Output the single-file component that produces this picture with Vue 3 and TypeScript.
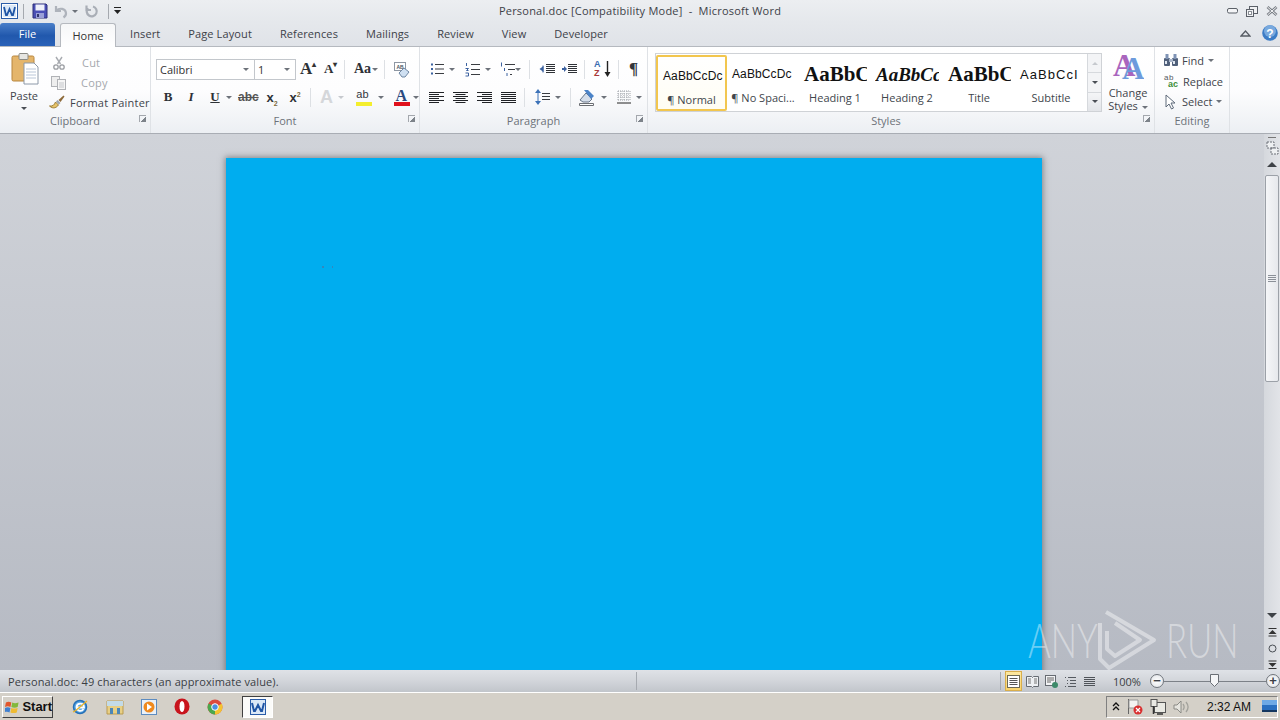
<script setup lang="ts">
const tabs = ['Insert', 'Page Layout', 'References', 'Mailings', 'Review', 'View', 'Developer']
const styles = [
  { sample: 'AaBbCcDc', label: '¶ Normal', cls: 's-body', on: true },
  { sample: 'AaBbCcDc', label: '¶ No Spaci...', cls: 's-body', on: false },
  { sample: 'AaBbC', label: 'Heading 1', cls: 's-h1', on: false },
  { sample: 'AaBbCc', label: 'Heading 2', cls: 's-h2', on: false },
  { sample: 'AaBbC', label: 'Title', cls: 's-h1', on: false },
  { sample: 'AaBbCcI', label: 'Subtitle', cls: 's-sub', on: false },
]
</script>

<template>
  <div class="app">
    <header class="titlebar">
      <div class="qat">
        <svg class="ic" width="18" height="18" viewBox="0 0 18 18"><rect x="0.5" y="1.5" width="16" height="15" fill="#fff" stroke="#2a5ca8"/><rect x="2" y="3" width="13" height="12" fill="#dbe8f7"/><path d="M3 5l2 8 1 0 2.500-6 2.500 6 1 0 2-8" fill="none" stroke="#1f55a5" stroke-width="1.800"/></svg>
        <i class="qsep"></i>
        <svg class="ic save" width="16" height="16" viewBox="0 0 16 16"><path d="M1 1h13l1 1v13H1z" fill="#4a4fb5" stroke="#2c2f78"/><rect x="3.500" y="1.500" width="9" height="6" fill="#eef0fa"/><rect x="4" y="10" width="8" height="5" fill="#9aa0d8"/><rect x="5" y="11" width="2" height="3" fill="#33366f"/></svg>
        <svg class="ic undo" width="15" height="15" viewBox="0 0 15 15"><path d="M2 2v5h5M2.500 6.500c3-3 9-2 9.500 2.500.2 2-1 3.500-2.500 4.500" fill="none" stroke="#aeb3bb" stroke-width="2.200"/></svg>
        <i class="arrow grey"></i>
        <svg class="ic redo" width="14" height="15" viewBox="0 0 14 15"><path d="M8 2.500a5 5 0 1 1-5 1.500M1.500 1.500v4.500h4.500" fill="none" stroke="#a9aeb6" stroke-width="2.200"/></svg>
        <i class="qsep"></i>
        <svg class="ic" width="7" height="8" viewBox="0 0 7 8"><path d="M0 0.500h7" stroke="#222"/><path d="M0 3h7L3.500 7z" fill="#222"/></svg>
      </div>
      <div class="caption">Personal.doc [Compatibility Mode]&nbsp; -&nbsp; Microsoft Word</div>
      <div class="winbtns">
        <svg width="11" height="6" viewBox="0 0 11 6"><rect x="0.500" y="0.500" width="10" height="4.500" rx="1.500" fill="#f4f5f7" stroke="#5b6068"/></svg>
        <svg width="12" height="11" viewBox="0 0 12 11"><rect x="3.500" y="0.500" width="8" height="7" fill="#f0f1f3" stroke="#5b6068"/><rect x="0.500" y="3.500" width="7" height="7" fill="#f0f1f3" stroke="#5b6068"/><rect x="2.500" y="5.500" width="3" height="3" fill="#fff" stroke="#8a8f96"/></svg>
        <svg width="12" height="10" viewBox="0 0 12 10"><path d="M1.500 1L10.500 9M10.500 1L1.500 9" stroke="#7a7f86" stroke-width="2.800"/><path d="M1.500 1L10.500 9M10.500 1L1.500 9" stroke="#f2f3f5" stroke-width="1"/></svg>
      </div>
    </header>

    <nav class="tabs">
      <div class="tab-file">File</div>
      <div class="tab-home">Home</div>
      <div v-for="t in tabs" :key="t" class="tab">{{ t }}</div>
      <div class="tab-right">
        <svg width="11" height="8" viewBox="0 0 11 8"><path d="M1 7l4.500-5L10 7z" fill="none" stroke="#555b63" stroke-width="1.300"/></svg>
        <svg width="16" height="16" viewBox="0 0 16 16"><circle cx="8" cy="8" r="7.800" fill="#3c7cc6"/><circle cx="8" cy="6" r="6" fill="#78a9de"/><text x="8" y="12.500" text-anchor="middle" class="helpq">?</text></svg>
      </div>
    </nav>

    <section class="ribbon">
      <!-- Clipboard -->
      <div class="group g-clip">
        <div class="gbody clip-body">
          <div class="paste">
            <svg width="28" height="32" viewBox="0 0 28 32"><rect x="1" y="3" width="22" height="25" rx="1.500" fill="#e4b56b" stroke="#b8863e"/><rect x="8" y="0.500" width="9" height="6" rx="1" fill="#e6e6e2" stroke="#8b8b85"/><path d="M13 10h10l4 4v17H13z" fill="#fff" stroke="#8c98a8"/><path d="M15 16h10M15 19h10M15 22h10M15 25h10" stroke="#b9c6d8"/></svg>
            <span class="lbl">Paste</span>
            <i class="arrow"></i>
          </div>
          <div class="clip-list">
            <div class="row-item dim">
              <svg width="14" height="14" viewBox="0 0 14 14"><path d="M4 1l4.500 7M10 1L5.500 8" stroke="#a8abb0" stroke-width="1.400"/><circle cx="4" cy="11" r="2.200" fill="none" stroke="#9a9da2" stroke-width="1.300"/><circle cx="10" cy="11" r="2.200" fill="none" stroke="#9a9da2" stroke-width="1.300"/></svg>
              <span>Cut</span>
            </div>
            <div class="row-item dim">
              <svg width="15" height="14" viewBox="0 0 15 14"><rect x="0.500" y="0.500" width="8" height="10" fill="#eee" stroke="#b0b2b6"/><rect x="6.500" y="3.500" width="8" height="10" fill="#f6f6f6" stroke="#b0b2b6"/><path d="M8 7h5M8 9h5M8 11h5" stroke="#c4c6ca"/></svg>
              <span>Copy</span>
            </div>
            <div class="row-item">
              <svg width="16" height="15" viewBox="0 0 16 15"><path d="M0.500 11c3 .5 5-1 6-4l3 3c-2 2.500-5 4.500-9 1z" fill="#e7c46a" stroke="#9a7c36"/><path d="M7 6.500l3 3 1.500-1.500-3-3z" fill="#9aa3ae"/><path d="M9.500 5l2 2L15.500 1.500 14.500.5z" fill="#8d6a3a"/></svg>
              <span>Format Painter</span>
            </div>
          </div>
        </div>
        <footer class="gfoot">Clipboard<i class="launch"></i></footer>
      </div>

      <!-- Font -->
      <div class="group g-font">
        <div class="gbody col">
          <div class="line l1">
            <div class="combo c-name"><span>Calibri</span><i class="arrow grey"></i></div>
            <div class="combo c-size"><span>1</span><i class="arrow grey"></i></div>
            <span class="gly grow">A<sup>▴</sup></span>
            <span class="gly shrink">A<sup>▾</sup></span>
            <i class="vsep s1"></i>
            <span class="gly case">Aa<i class="arrow grey"></i></span>
            <i class="vsep s2"></i>
            <svg class="clear" width="17" height="17" viewBox="0 0 17 17"><rect x="1.500" y="1.500" width="11" height="8" fill="#fff" stroke="#8e97a3"/><text x="7" y="8" text-anchor="middle" class="tiny">AB</text><path d="M6 12l5-5 5 4-4 5H9z" fill="#cfe0f2" stroke="#6f87a3"/></svg>
          </div>
          <div class="line l2">
            <span class="fmt b">B</span>
            <span class="fmt i">I</span>
            <span class="fmt u">U</span>
            <i class="arrow grey a-u"></i>
            <span class="fmt st">abc</span>
            <span class="fmt sc">x<sub>2</sub></span>
            <span class="fmt sp">x<sup>2</sup></span>
            <i class="vsep s3"></i>
            <span class="fx">A</span><i class="arrow pale"></i>
            <span class="hl">ab<em></em></span><i class="arrow grey"></i>
            <span class="fc">A<em></em></span><i class="arrow grey"></i>
          </div>
        </div>
        <footer class="gfoot">Font<i class="launch"></i></footer>
      </div>

      <!-- Paragraph -->
      <div class="group g-para">
        <div class="gbody col">
          <div class="line p1">
            <svg class="lst" width="14" height="14" viewBox="0 0 14 14"><path d="M5 2.500h9M5 7h9M5 11.500h9" stroke="#3a3d42"/><path d="M1 1.500h2v2H1zM1 6h2v2H1zM1 10.500h2v2H1z" fill="#3c62a0"/></svg><i class="arrow grey"></i>
            <svg class="num" width="15" height="15" viewBox="0 0 15 15"><path d="M6 2.500h9M6 7.500h9M6 12.500h9" stroke="#3a3d42"/><path d="M1.500 1v3M.5 6.500h3l-2 2h2M.5 11h3v3h-3" fill="none" stroke="#3c62a0"/></svg><i class="arrow grey"></i>
            <svg class="ml" width="15" height="15" viewBox="0 0 15 15"><path d="M5 2.500h10M8 7.500h7M10 12.500h2" stroke="#3a3d42"/><path d="M1.500 0.500v4M4.500 6v3M7 11v3" fill="none" stroke="#3c62a0"/></svg><i class="arrow grey"></i>
            <i class="vsep sp1"></i>
            <svg class="out" width="16" height="15" viewBox="0 0 16 15"><path d="M7 2.500h9M7 4.500h9M7 6.500h9M7 8.500h9M7 10.500h9" stroke="#2f3237"/><path d="M4 3.500v7" stroke="#3c62a0"/><path d="M0.500 7l4-3v6z" fill="#3c62a0"/></svg>
            <svg class="ind" width="16" height="15" viewBox="0 0 16 15"><path d="M7 2.500h9M7 4.500h9M7 6.500h9M7 8.500h9M7 10.500h9" stroke="#2f3237"/><path d="M1 7h4" stroke="#3c62a0" stroke-width="2"/><path d="M6 7l-3-3v6z" fill="#3c62a0"/></svg>
            <i class="vsep sp2"></i>
            <span class="sort"><b>A</b><b class="z">Z</b></span>
            <svg class="down" width="7" height="17" viewBox="0 0 7 17"><path d="M3.500 0v13" stroke="#222" stroke-width="1.400"/><path d="M0.500 11h6L3.500 16z" fill="#222"/></svg>
            <i class="vsep sp3"></i>
            <span class="pil">¶</span>
          </div>
          <div class="line p2">
            <svg class="al" width="15" height="13" viewBox="0 0 15 13"><path d="M0 1.500h15M0 3.500h10M0 5.500h15M0 7.500h10M0 9.500h15M0 11.500h10" stroke="#202226"/></svg>
            <svg class="al" width="15" height="13" viewBox="0 0 15 13"><path d="M0 1.500h15M2.500 3.500h10M0 5.500h15M2.500 7.500h10M0 9.500h15M2.500 11.500h10" stroke="#202226"/></svg>
            <svg class="al" width="15" height="13" viewBox="0 0 15 13"><path d="M0 1.500h15M5 3.500h10M0 5.500h15M5 7.500h10M0 9.500h15M5 11.500h10" stroke="#202226"/></svg>
            <svg class="al" width="15" height="13" viewBox="0 0 15 13"><path d="M0 1.500h15M0 3.500h15M0 5.500h15M0 7.500h15M0 9.500h15M0 11.500h15" stroke="#202226"/></svg>
            <i class="vsep sp4"></i>
            <svg class="ls" width="15" height="16" viewBox="0 0 15 16"><path d="M7 4.500h8M7 7.500h8M7 10.500h8" stroke="#3a3d42"/><path d="M3 0l3 4H0zM3 16l-3-4h6z" fill="#3c72b8"/><path d="M3 4v8" stroke="#3c72b8"/></svg><i class="arrow grey"></i>
            <i class="vsep sp5"></i>
            <svg class="shade" width="17" height="17" viewBox="0 0 17 17"><path d="M1 11l6-7 6 6-3 3H4z" fill="#d5deea" stroke="#68768a"/><path d="M5 1h4l6 6-3 3z" fill="#4b83c8"/><path d="M0.500 14.500h14v2h-14z" fill="#fff" stroke="#6a6d72"/></svg><i class="arrow grey"></i>
            <svg class="bord" width="14" height="14" viewBox="0 0 14 14"><path d="M1 1h12M1 4h12M1 7h12M1 10h12M1 1v10M4 1v10M7 1v10M10 1v10M13 1v10" stroke="#9ea2a8" stroke-dasharray="1 1"/><path d="M0 13h14" stroke="#222"/></svg><i class="arrow grey"></i>
          </div>
        </div>
        <footer class="gfoot">Paragraph<i class="launch"></i></footer>
      </div>

      <!-- Styles -->
      <div class="group g-styles">
        <div class="gbody styles-body">
          <div class="gallery">
            <div v-for="s in styles" :key="s.label" class="style" :class="{ on: s.on }">
              <div class="sample" :class="s.cls">{{ s.sample }}</div>
              <div class="slabel">{{ s.label }}</div>
            </div>
            <div class="gscroll">
              <span><i class="arrow up pale"></i></span>
              <span><i class="arrow"></i></span>
              <span class="more"><i class="arrow"></i></span>
            </div>
          </div>
          <div class="change">
            <svg width="32" height="30" viewBox="0 0 32 30"><text x="1" y="25" class="bigA a1">A</text><text x="10" y="28" class="bigA a2">A</text></svg>
            <span class="lbl">Change</span>
            <span class="lbl">Styles<i class="arrow grey inl"></i></span>
          </div>
        </div>
        <footer class="gfoot"><span class="styles-cap">Styles</span><i class="launch"></i></footer>
      </div>

      <!-- Editing -->
      <div class="group g-edit">
        <div class="gbody edit-list">
          <div class="row-item">
            <svg width="16" height="14" viewBox="0 0 16 14"><rect x="1" y="5" width="6" height="8" rx="1" fill="#50607a"/><rect x="9" y="5" width="6" height="8" rx="1" fill="#50607a"/><rect x="2.500" y="1" width="3" height="5" fill="#7f93b5"/><rect x="10.500" y="1" width="3" height="5" fill="#7f93b5"/><rect x="6" y="6" width="4" height="3" fill="#a8b5ca"/><rect x="2" y="8" width="2" height="3" fill="#dfe6f0"/><rect x="10" y="8" width="2" height="3" fill="#dfe6f0"/></svg>
            <span>Find</span><i class="arrow grey"></i>
          </div>
          <div class="row-item">
            <span class="rep"><b>a</b><b>b</b><em>ac</em></span>
            <span>Replace</span>
          </div>
          <div class="row-item">
            <svg width="16" height="16" viewBox="0 0 16 16"><path d="M3 1v12l3-3 2.500 5 2-1-2.500-5h4z" fill="#fff" stroke="#5e6a7a"/></svg>
            <span>Select</span><i class="arrow grey"></i>
          </div>
        </div>
        <footer class="gfoot">Editing</footer>
      </div>
    </section>

    <main class="workspace">
      <div class="docarea">
        <div class="page"><i class="speck s-a"></i><i class="speck s-b"></i></div>
      </div>
      <aside class="vscroll">
        <div class="sc-top">
          <i class="splitter"></i>
          <svg width="13" height="14" viewBox="0 0 13 14"><path d="M1 1h7v6H1zM5 7h7v6H5z" fill="#eef0f2" stroke="#6c7178" stroke-dasharray="2 1"/></svg>
          <i class="arrow up dark"></i>
        </div>
        <div class="thumbwrap">
          <div class="thumb"><i></i></div>
        </div>
        <div class="sc-bot">
          <i class="arrow dark"></i>
          <svg width="9" height="9" viewBox="0 0 9 9"><path d="M0.500 0.500h8" stroke="#333"/><path d="M4.500 2l4 4h-8z" fill="#333"/><path d="M0.500 8h8" stroke="#333"/></svg>
          <svg width="9" height="9" viewBox="0 0 9 9"><circle cx="4.500" cy="4.500" r="3.500" fill="none" stroke="#4b4f55"/></svg>
          <svg width="9" height="9" viewBox="0 0 9 9"><path d="M0.500 1h8" stroke="#333"/><path d="M4.500 7l4-4h-8z" fill="#333"/><path d="M0.500 8.500h8" stroke="#333"/></svg>
        </div>
      </aside>
      <div class="watermark" aria-hidden="false">
        <span>ANY</span>
        <svg width="68" height="62" viewBox="0 0 68 62"><path d="M14 3L62 31 17 59 8 50V14M23 14L48 31 23 47 15 40V22" fill="none" stroke="#fff" stroke-opacity=".42" stroke-width="4" stroke-linejoin="round"/></svg>
        <span>RUN</span>
      </div>
    </main>

    <footer class="status">
      <div class="st-left">Personal.doc: 49 characters (an approximate value).</div>
      <i class="st-sep sep-a"></i>
      <div class="st-mid"></div>
      <i class="st-sep"></i>
      <div class="views">
        <span class="view on"><svg width="13" height="13" viewBox="0 0 13 13"><rect x="0.500" y="0.500" width="12" height="12" fill="#fff" stroke="#6e6a55"/><path d="M2.500 3.500h8M2.500 5.500h8M2.500 7.500h8M2.500 9.500h8" stroke="#555"/></svg></span>
        <span class="view"><svg width="13" height="13" viewBox="0 0 13 13"><path d="M0.500 1.500h5l1 1 1-1h5v10h-5l-1 1-1-1h-5z" fill="#eef0f3" stroke="#666b72"/><path d="M2 4h3M2 6h3M2 8h3M8 4h3M8 6h3M8 8h3" stroke="#777"/></svg></span>
        <span class="view"><svg width="13" height="13" viewBox="0 0 13 13"><rect x="0.500" y="0.500" width="10" height="10" fill="#f2f3f5" stroke="#666b72"/><path d="M2 3h7M2 5h7M2 7h4" stroke="#666"/><circle cx="10" cy="10" r="3" fill="#3d8a6a"/></svg></span>
        <span class="view"><svg width="13" height="13" viewBox="0 0 13 13"><path d="M1 2.500h1M4 2.500h8M3 5.500h1M6 5.500h6M3 8.500h1M6 8.500h6M1 11.500h1M4 11.500h8" stroke="#555a60"/></svg></span>
        <span class="view"><svg width="13" height="13" viewBox="0 0 13 13"><path d="M1 2.500h11M1 4.500h11M1 6.500h11M1 8.500h11M1 10.500h11" stroke="#4f5359"/></svg></span>
      </div>
      <div class="pct">100%</div>
      <div class="zoom">
        <span class="zbtn">−</span>
        <div class="ztrack"><svg class="zthumb" width="9" height="13" viewBox="0 0 9 13"><path d="M0.500 0.500h8v8l-4 4-4-4z" fill="#f4f5f7" stroke="#6a6f76"/></svg></div>
        <span class="zbtn">+</span>
      </div>
    </footer>

    <footer class="taskbar">
      <div class="start">
        <svg width="17" height="16" viewBox="0 0 17 16"><path d="M1 3c2-1 4-1 6 0l-1 5c-2-1-4-1-6 0z" fill="#e2562c"/><path d="M8 3c2 1 4 1 7 0l-1 5c-2 1-5 1-7 0z" fill="#83b83c"/><path d="M0 9c2-1 4-1 6 0l-1 5c-2-1-4-1-6 0z" fill="#3f7fd0"/><path d="M7 9c2 1 4 1 7 0l-1 5c-2 1-5 1-7 0z" fill="#efbb33"/></svg>
        <span>Start</span>
      </div>
      <div class="apps">
        <svg width="18" height="18" viewBox="0 0 18 18"><circle cx="9" cy="9" r="6.500" fill="#5ba6e4" stroke="#2470b8" stroke-width="1.500"/><path d="M5 9.500h8c0-5-7-5-7.500-.5.500 4.500 5 5 7 2" fill="none" stroke="#fff" stroke-width="1.800"/><path d="M2 14c3-1 9-7 14-11" fill="none" stroke="#e8b32a" stroke-width="1.300"/></svg>
        <svg width="18" height="17" viewBox="0 0 18 17"><path d="M1 3h16v13H1z" fill="#e8cf84" stroke="#b99a50"/><path d="M1 3h16v5H1z" fill="#c3dbe8"/><rect x="4" y="10" width="3" height="6" fill="#4b86b8"/><rect x="11" y="10" width="3" height="6" fill="#4b86b8"/></svg>
        <svg width="16" height="16" viewBox="0 0 16 16"><rect x="0.500" y="0.500" width="15" height="15" fill="#eaf1f8" stroke="#5d8cc0"/><circle cx="8" cy="8" r="5.500" fill="#ef8a1e"/><path d="M6 4.500l5 3.500-5 3.500z" fill="#fff"/></svg>
        <svg width="16" height="17" viewBox="0 0 16 17"><ellipse cx="8" cy="8.500" rx="7.500" ry="8" fill="#c8141c"/><ellipse cx="8" cy="8.500" rx="2.500" ry="5.500" fill="#fff"/></svg>
        <svg width="16" height="16" viewBox="0 0 16 16"><circle cx="8" cy="8" r="7.500" fill="#dc4a3c"/><path d="M8 8L1.500 4.500A7.500 7.500 0 0 0 8 15.500z" fill="#4aa84e"/><path d="M8 8l6.800-3.200A7.500 7.500 0 0 1 8 15.500z" fill="#f4c430"/><circle cx="8" cy="8" r="3.300" fill="#4a8fe0" stroke="#fff"/></svg>
        <div class="word-btn">
          <svg width="16" height="16" viewBox="0 0 16 16"><rect x="0.500" y="0.500" width="15" height="15" fill="#dbe8f7" stroke="#2a5ca8"/><path d="M2 4l2 8h1l3-6 3 6h1l2-8" fill="none" stroke="#1f55a5" stroke-width="2"/></svg>
        </div>
      </div>
      <div class="tray">
        <svg width="8" height="9" viewBox="0 0 8 9"><path d="M1 4l3-3 3 3M1 8l3-3 3 3" fill="none" stroke="#111" stroke-width="1.300"/></svg>
        <svg width="16" height="17" viewBox="0 0 16 17"><path d="M1.500 1v15" stroke="#666"/><path d="M2 2h9v8H2z" fill="#f4f4f2" stroke="#999"/><circle cx="11" cy="12" r="4.500" fill="#d93030"/><path d="M9 10l4 4M13 10l-4 4" stroke="#fff" stroke-width="1.200"/></svg>
        <svg width="16" height="16" viewBox="0 0 16 16"><rect x="4.500" y="3.500" width="11" height="10" fill="#e9e9e3" stroke="#555"/><rect x="1" y="0.500" width="6" height="7" fill="#e9e9e3" stroke="#555"/><path d="M3.500 7v8M7 15h6" stroke="#333" stroke-width="1.500"/></svg>
        <svg width="16" height="14" viewBox="0 0 16 14"><path d="M1 5h3l4-4v12l-4-4H1z" fill="#e6e5df" stroke="#8a8a85"/><path d="M10 4c1.500 2 1.500 4 0 6M13 2c2.500 3 2.500 7 0 10" fill="none" stroke="#a2a29c" stroke-width="1.300"/></svg>
        <span class="clock">2:32 AM</span>
        <svg width="15" height="13" viewBox="0 0 15 13"><rect x="0" y="0" width="15" height="12" fill="#2a6fc0"/><rect x="0" y="0" width="15" height="5" fill="#6ea9e6"/><rect x="0" y="10" width="15" height="2" fill="#14365f"/></svg>
      </div>
    </footer>
  </div>
</template>

<style>
html, body { margin: 0; padding: 0; overflow: hidden; }
</style>

<style scoped>
.app {
  width: 1280px; height: 720px; display: flex; flex-direction: column; overflow: hidden;
  font-family: "Open Sans", "Noto Sans", sans-serif; font-size: 11px; color: #3f444b;
}
i { display: block; font-style: normal; }
.ic { flex: none; }

/* arrows */
.arrow { width: 0; height: 0; border-left: 3px solid transparent; border-right: 3px solid transparent; border-top: 3px solid #4a4e55; flex: none; }
.arrow.grey { border-top-color: #6d727a; }
.arrow.pale { border-top-color: #c6c9ce; }
.arrow.up { border-top: 0; border-bottom: 3px solid #4a4e55; }
.arrow.up.pale { border-bottom-color: #c6c9ce; }
.arrow.dark { border-left-width: 5px; border-right-width: 5px; border-top-width: 5px; border-top-color: #3e4247; }
.arrow.up.dark { border-top: 0; border-bottom: 5px solid #3e4247; }
.arrow.inl { display: inline-block; margin-left: 4px; vertical-align: middle; }

/* title */
.titlebar { height: 22px; display: flex; align-items: center; position: relative; background: linear-gradient(#eceef1, #e5e8ec); flex: none; }
.qat { display: flex; align-items: center; padding-left: 1px; }
.qsep { width: 1px; height: 15px; background: #a5a9af; margin: 0 5px 0 4px; }
.save { margin-left: 3px; }
.undo { margin-left: 6px; margin-right: 3px; }
.redo { margin-left: 7px; margin-right: 5px; }
.caption { position: absolute; left: 0; right: 0; top: 3px; text-align: center; font-size: 11px; letter-spacing: .02em; color: #3d4147; }
.winbtns { margin-left: auto; display: flex; align-items: center; gap: 8px; padding-right: 2px; }

/* tabs */
.tabs { height: 25px; flex: none; display: flex; align-items: flex-end; background: linear-gradient(#e5e8ec, #e0e3e8); border-bottom: 1px solid #b5b9bf; box-sizing: border-box; color: #3d4148; position: relative; }
.tab-file { width: 55px; height: 23px; line-height: 22px; text-align: center; color: #fff; background: linear-gradient(#4a7fc9, #2158ad 55%, #2a62b8); border-radius: 3px 3px 0 0; }
.tab-home { width: 56px; height: 24px; line-height: 23px; text-align: center; margin: 0 0 -1px 5px; background: linear-gradient(#f6f7f8, #fff); border: 1px solid #b5b9bf; border-bottom: 0; border-radius: 3px 3px 0 0; box-sizing: border-box; color: #333; }
.tab { padding: 0 14px; height: 23px; line-height: 22px; letter-spacing: .01em; }
.tab-right { margin-left: auto; display: flex; align-items: center; gap: 11px; height: 22px; padding: 0 2px 2px 0; }
.helpq { font: bold 12px "Liberation Sans", sans-serif; fill: #fff; }

/* ribbon */
.ribbon { height: 87px; flex: none; display: flex; background: linear-gradient(#fff, #fdfdfe 50%, #eceff3); border-bottom: 1px solid #a9adb4; box-sizing: border-box; }
.group { display: flex; flex-direction: column; border-right: 1px solid #dfe2e6; box-sizing: border-box; flex: none; }
.g-clip { width: 151px; }
.g-font { width: 269px; }
.g-para { width: 228px; }
.g-styles { width: 507px; }
.g-edit { width: 75px; }
.gbody { flex: 1; min-height: 0; }
.gfoot { height: 17px; flex: none; display: flex; justify-content: center; align-items: center; position: relative; color: #6d7279; font-size: 11px; padding-bottom: 4px; box-sizing: content-box; margin-bottom: 0; }
.launch { position: absolute; right: 4px; top: 3px; width: 6px; height: 6px; border-top: 1px solid #a3a7ad; border-left: 1px solid #a3a7ad; background: linear-gradient(135deg, transparent 55%, #7d838a 55%); }
.lbl { color: #3f444b; line-height: 13px; }

/* clipboard */
.clip-body { display: flex; padding-top: 6px; }
.paste { width: 48px; display: flex; flex-direction: column; align-items: center; }
.paste svg { margin-bottom: 4px; margin-left: 1px; }
.paste .lbl { margin-bottom: 5px; }
.clip-list { display: flex; flex-direction: column; gap: 0; }
.row-item { height: 22px; display: flex; align-items: center; gap: 4px; white-space: nowrap; }
.row-item svg { flex: none; }
.clip-list .row-item span { margin-left: 1px; letter-spacing: .02em; }
.clip-list .row-item:nth-child(1) svg { margin-left: 4px; margin-right: 11px; }
.clip-list .row-item:nth-child(2) svg { margin-left: 3px; margin-right: 10px; }
.clip-list .row-item:nth-child(3) svg { margin-left: 1px; }
.dim { color: #a5a8ad; }

/* font */
.col { display: flex; flex-direction: column; }
.line { display: flex; align-items: center; height: 20px; }
.l1 { margin-top: 12px; padding-left: 5px; }
.l2 { margin-top: 8px; padding-left: 11px; }
.combo { height: 21px; box-sizing: border-box; border: 1px solid #c3c7cc; display: flex; align-items: center; justify-content: space-between; padding: 0 5px 0 3px; background: #fff; color: #333; }
.c-name { width: 99px; }
.c-size { width: 42px; margin-left: -1px; }
.gly { font-family: "Liberation Serif", serif; font-weight: bold; color: #2d3136; display: flex; align-items: center; position: relative; }
.gly sup { font-size: 8px; line-height: 1; margin-top: -8px; color: #333; }
.grow { font-size: 17px; margin-left: 4px; width: 24px; }
.shrink { font-size: 13px; width: 20px; margin-left: 0; }
.vsep { width: 1px; height: 19px; background: #dde0e4; flex: none; }
.s1 { margin-right: 9px; }
.case { font-size: 14px; width: 25px; gap: 1px; }
.s2 { margin: 0 8px 0 5px; }
.clear { flex: none; }
.tiny { font: bold 5px "Liberation Sans", sans-serif; fill: #4a5563; }
.fmt { flex: none; text-align: center; color: #2d3136; font-family: "Liberation Serif", serif; font-size: 13px; }
.b { width: 12px; font-weight: bold; }
.i { width: 12px; font-style: italic; margin-left: 11px; font-weight: bold; }
.u { width: 12px; margin-left: 12px; text-decoration: underline; font-weight: bold; }
.a-u { margin-left: 5px; margin-right: 6px; }
.st { width: 20px; font-size: 12px; text-decoration: line-through; font-family: "Liberation Sans"; font-weight: bold; color: #555; }
.sc { width: 16px; margin-left: 6px; font-weight: bold; font-family: "Liberation Sans"; }
.sc sub, .sp sup { font-size: 7px; color: #7c6a3c; line-height: 0; }
.sp { width: 16px; margin-left: 7px; font-weight: bold; font-family: "Liberation Sans"; }
.s3 { margin: 0 9px 0 7px; }
.fx { font: bold 18px "Liberation Sans", sans-serif; color: #d5d7da; width: 16px; margin-right: 3px; }
.hl { position: relative; width: 18px; height: 18px; font: 11px "Liberation Sans", sans-serif; color: #33373c; margin: 0 4px 0 12px; text-decoration: none; line-height: 13px; }
.hl em { position: absolute; left: 0; bottom: 0; width: 16px; height: 4px; background: #f4ee2e; }
.fc { position: relative; width: 16px; height: 18px; font: bold 16px "Liberation Serif", serif; color: #2b4a80; margin: 0 4px 0 10px; line-height: 15px; text-align: center; }
.fc em { position: absolute; left: 0; bottom: 0; width: 16px; height: 4px; background: #e0101c; }

/* paragraph */
.p1 { margin-top: 12px; padding-left: 10px; }
.p2 { margin-top: 8px; padding-left: 9px; }
.p1 svg, .p2 svg { flex: none; }
.p1 .arrow, .p2 .arrow { margin-left: 5px; }
.num { margin-left: 10px; }
.ml { margin-left: 9px; }
.p1 .arrow:nth-of-type(3) { margin-left: 0; }
.sp1 { margin: 0 9px 0 8px; }
.ind { margin-left: 6px; }
.sp2 { margin: 0 9px 0 7px; }
.sort { display: flex; flex-direction: column; width: 9px; font: bold 9px/9px "Liberation Sans", sans-serif; color: #3a6cb0; }
.sort b { display: block; }
.sort .z { color: #a83a3a; }
.down { margin-left: 1px; }
.sp3 { margin: 0 10px 0 7px; }
.pil { font: bold 17px "Liberation Serif", serif; color: #33363b; }
.al { margin-right: 9px; }
.sp4 { margin: 0 10px 0 -1px; }
.sp5 { margin: 0 8px 0 9px; }
.bord { margin-left: 10px; }

/* styles */
.styles-body { display: flex; padding: 6px 0 0 7px; align-items: flex-start; }
.gallery { width: 447px; height: 59px; box-sizing: border-box; border: 1px solid #cfd2d6; display: flex; background: #fff; margin-right: 2px; }
.style { width: 72px; height: 57px; box-sizing: border-box; text-align: center; overflow: hidden; flex: none; padding: 0 4px; }
.style.on { width: 71px; height: 56px; margin-top: 1px; border: 2px solid #f2c64e; border-radius: 2px; background: linear-gradient(#fff, #fffdf3); padding: 0 2px; margin-left: 0; }
.sample { height: 29px; margin-top: 6px; line-height: 29px; white-space: nowrap; overflow: hidden; color: #111; text-align: left; padding-left: 1px; }
.style.on .sample { margin-top: 5px; padding-left: 3px; }
.s-body { font-family: "Liberation Sans", sans-serif; font-size: 12px; letter-spacing: .01em; }
.s-h1 { font-family: "Liberation Serif", serif; font-weight: bold; font-size: 21px; }
.s-h2 { font-family: "Liberation Serif", serif; font-weight: bold; font-style: italic; font-size: 19px; }
.s-sub { font-family: "Liberation Sans", sans-serif; font-size: 13px; letter-spacing: .08em; }
.slabel { font-size: 11px; color: #41464c; line-height: 15px; white-space: nowrap; margin-top: 1px; }
.gscroll { width: 14px; margin-left: auto; display: flex; flex-direction: column; border-left: 1px solid #d6d9dd; background: #f3f4f6; }
.gscroll span { flex: 1; display: flex; align-items: center; justify-content: center; border-bottom: 1px solid #d6d9dd; }
.gscroll span:last-child { border-bottom: 0; background: linear-gradient(#f4f5f7, #e3e5e9); }
.more { box-shadow: inset 0 0 0 0 #000; }
.change { width: 48px; display: flex; flex-direction: column; align-items: center; }
.change svg { margin-bottom: 5px; margin-top: -2px; }
.bigA { font: bold 31px "Liberation Serif", serif; }
.a1 { fill: #a965bd; }
.a2 { fill: #6d9bdc; }
.styles-cap { margin-right: 20px; margin-left: -10px; }

/* editing */
.edit-list { display: flex; flex-direction: column; padding: 3px 0 0 8px; }
.edit-list .row-item { gap: 3px; }
.edit-list .arrow { margin-left: 1px; }
.rep { position: relative; width: 17px; height: 16px; font: 8px "Liberation Sans", sans-serif; color: #55595f; display: block; }
.rep b { font-weight: normal; position: absolute; top: 0; left: 1px; }
.rep b + b { left: 6px; }
.rep em { position: absolute; left: 5px; bottom: 0; font: bold 9px "Liberation Sans", sans-serif; color: #3f8f3a; }

/* workspace */
.workspace { flex: 1; min-height: 0; display: flex; position: relative; background: linear-gradient(#d0d3d9, #b6bac3); }
.docarea { flex: 1; min-width: 0; overflow: hidden; padding: 24px 0 0 226px; box-sizing: border-box; }
.page { width: 816px; height: 700px; background: #00adef; box-shadow: 0 0 6px 1px rgba(70,70,70,.55); position: relative; }
.speck { position: absolute; width: 2px; height: 2px; background: rgba(70,120,170,.7); top: 108px; }
.s-a { left: 96px; }
.s-b { left: 106px; width: 1px; }
.vscroll { width: 16px; flex: none; display: flex; flex-direction: column; align-items: center; background: linear-gradient(90deg, #d5d8dd, #e2e4e8); }
.sc-top { height: 41px; display: flex; flex-direction: column; align-items: center; justify-content: flex-start; padding-top: 3px; box-sizing: border-box; width: 100%; }
.splitter { width: 8px; height: 1px; background: #777; margin-bottom: 3px; }
.sc-top .arrow { margin-top: 7px; }
.thumbwrap { flex: 1; min-height: 0; width: 100%; }
.thumb { width: 14px; height: 207px; margin: 0 1px; box-sizing: border-box; border: 1px solid #9ca1a8; border-radius: 2px; background: linear-gradient(90deg, #f5f6f8, #e6e8ec); display: flex; align-items: center; justify-content: center; }
.thumb i { width: 8px; height: 7px; background: repeating-linear-gradient(#8b9098 0 1px, transparent 1px 2px); }
.sc-bot { height: 62px; display: flex; flex-direction: column; align-items: center; gap: 7px; width: 100%; flex: none; padding-top: 5px; box-sizing: border-box; }
.sc-bot .arrow { margin-bottom: 3px; }
.watermark { position: absolute; right: 48px; bottom: -1px; display: flex; align-items: center; gap: 2px; color: rgba(255,255,255,.42); font-family: "Lato", sans-serif; font-weight: 300; font-size: 47px; line-height: 62px; }
.watermark span { display: inline-block; width: 62px; white-space: nowrap; transform: scaleX(.74); transform-origin: left center; }
.watermark span:last-child { width: 66px; margin-left: 4px; }

/* status */
.status { height: 22px; flex: none; display: flex; align-items: center; background: linear-gradient(#dfe2e7, #d2d5da 50%, #c1c5cb); box-sizing: border-box; color: #3a3e44; position: relative; }
.st-left { width: 638px; padding-left: 8px; box-sizing: border-box; letter-spacing: .01em; white-space: nowrap; }
.st-sep { width: 1px; height: 18px; background: #a6aab0; flex: none; }
.st-mid { width: 364px; }
.views { display: flex; align-items: center; margin-left: 4px; gap: 2px; }
.view { width: 17px; height: 20px; display: flex; align-items: center; justify-content: center; }
.view.on { background: linear-gradient(#fde9a3, #f9d36a); box-shadow: inset 0 0 0 1px #d9ae4c; }
.pct { margin-left: 15px; width: 30px; letter-spacing: -.01em; }
.zoom { display: flex; align-items: center; margin-left: 7px; }
.zbtn { width: 14px; height: 14px; border-radius: 50%; box-sizing: border-box; border: 1px solid #6f747b; background: radial-gradient(#fff, #dfe2e6); display: flex; align-items: center; justify-content: center; font: bold 13px/12px "Liberation Sans", sans-serif; color: #3c4046; flex: none; }
.ztrack { width: 102px; height: 1px; background: #7c8188; position: relative; }
.zthumb { position: absolute; left: 46px; top: -7px; }

/* taskbar */
.taskbar { height: 28px; flex: none; display: flex; align-items: center; background: #d4d0c8; border-top: 1px solid #fff; box-sizing: border-box; }
.start { width: 51px; height: 22px; margin-left: 2px; display: flex; align-items: center; gap: 2px; padding-left: 2px; box-sizing: border-box; background: #d4d0c8; border: 1px solid; border-color: #fff #404040 #404040 #fff; font: bold 13px "Liberation Sans", sans-serif; color: #111; flex: none; }
.apps { display: flex; align-items: center; margin-left: 18px; gap: 17px; }
.apps svg { flex: none; }
.word-btn { width: 31px; height: 22px; margin-left: 2px; background: #fbfbf9; border: 1px solid; border-color: #404040 #fff #fff #404040; box-sizing: border-box; display: flex; align-items: center; justify-content: center; }
.tray { margin-left: auto; margin-right: 2px; width: 172px; height: 22px; box-sizing: border-box; border: 1px solid; border-color: #808080 #fff #fff #808080; display: flex; align-items: center; padding-left: 5px; gap: 7px; }
.tray svg { flex: none; }
.clock { font: 12px "Liberation Sans", sans-serif; color: #111; margin-left: 11px; width: 56px; white-space: nowrap; }
</style>
